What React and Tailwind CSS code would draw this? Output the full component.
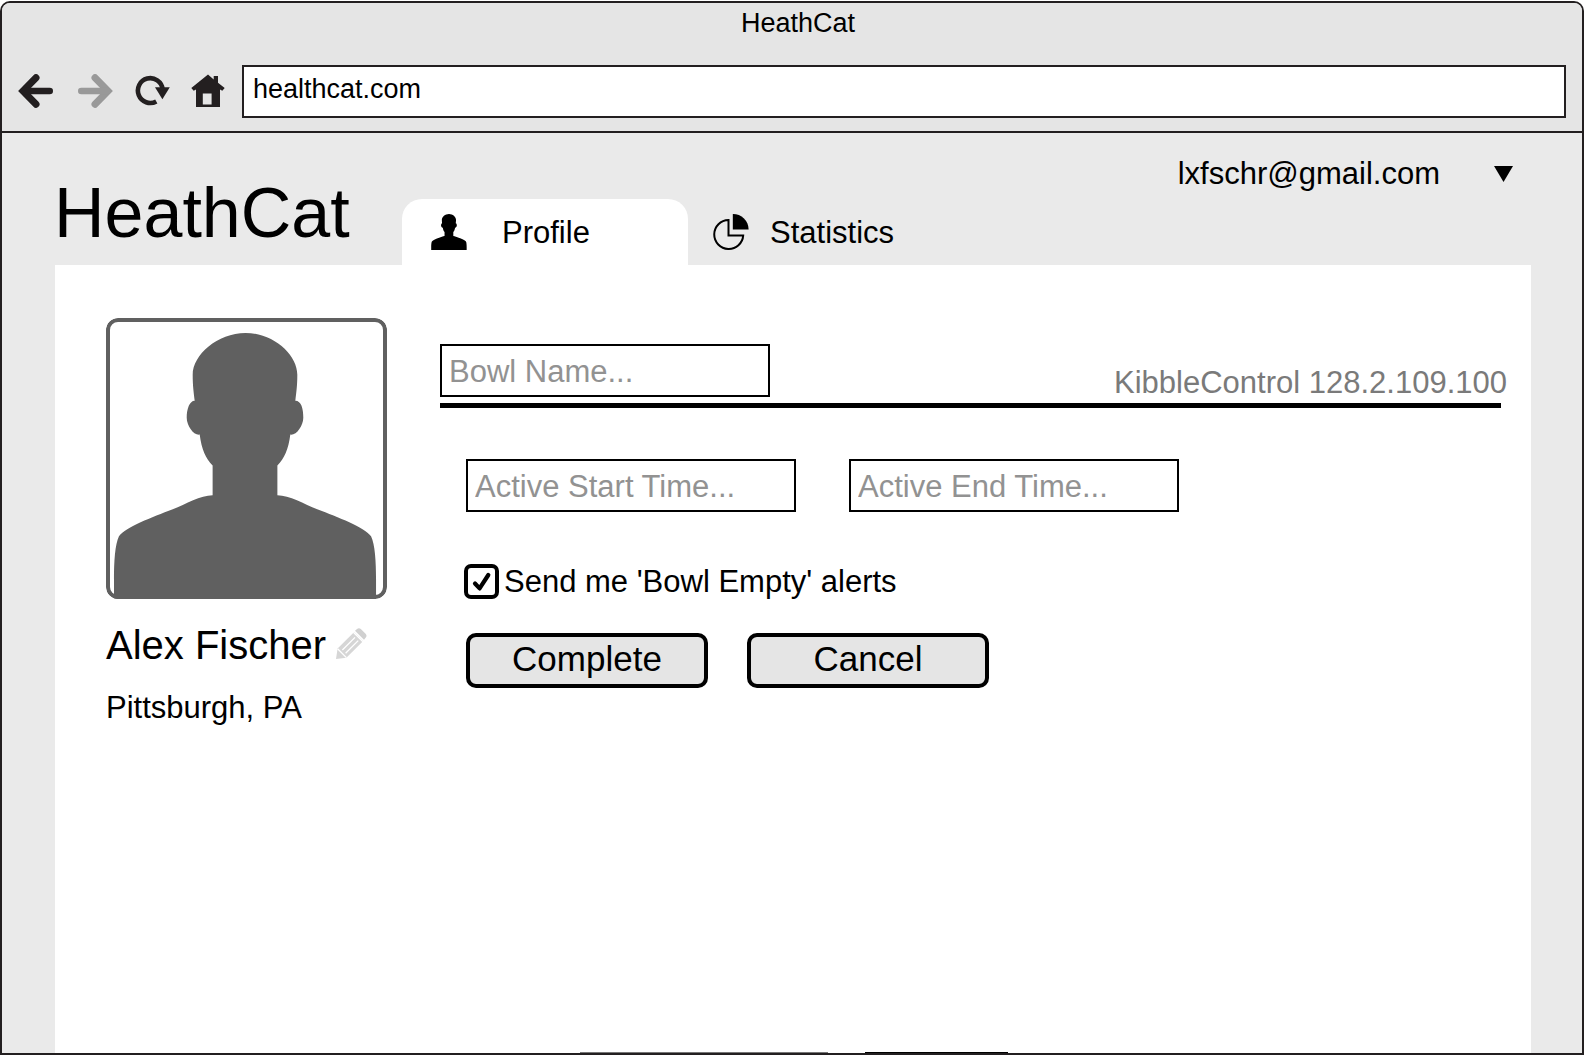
import { useState } from "react";

function ArrowIcon({ className }) {
  return (
    <svg viewBox="0 0 36 34" className={className} fill="none" stroke="currentColor" aria-hidden="true">
      <path d="M18 3.7 L5 17 L18 30.3" strokeWidth="7" strokeLinecap="round" strokeMiterlimit="6" />
      <path d="M6 17 H31.7" strokeWidth="6.6" strokeLinecap="round" />
    </svg>
  );
}

function RefreshIcon() {
  return (
    <svg viewBox="0 0 35 32" className="h-8 w-[35px]" fill="none" aria-hidden="true">
      <path d="M21.3 26.4 A12.4 12.4 0 1 1 27.6 14" stroke="currentColor" strokeWidth="4.6" />
      <path d="M20 12.2 H34.8 L27.4 24.2 Z" fill="currentColor" />
    </svg>
  );
}

function HomeIcon() {
  return (
    <svg viewBox="0 0 34 34" className="h-[34px] w-[34px]" fill="currentColor" aria-hidden="true">
      <path
        fillRule="evenodd"
        d="M17 .6 L22.7 5.4 V2 H27 V8.8 L33.7 14 L31.3 16.8 L29 15.4 V33 H5 V15.4 L2.7 16.8 L.3 14 Z M11.8 19.4 H20.6 V30.6 H11.8 Z"
      />
    </svg>
  );
}

function Silhouette({ viewBox, className }) {
  return (
    <svg viewBox={viewBox} className={className} fill="currentColor" aria-hidden="true">
      <path d="M140 15 C168 15 192 37 192 57 C192 68 191 75 190 83 C196 83 198 91 198 100 C198 108 191 118 185 117 C183 132 179 141 172 148 V178 C184 178 199 187 212 192 C233 200 259 210 266 219 C270 227 271 245 271 262 V282 H8 V262 C8 245 9 227 13 219 C20 210 46 200 67 192 C80 187 95 178 107 178 V148 C100 141 96 132 94 117 C88 118 81 108 81 100 C81 91 84 83 89 83 C88 75 87 68 87 57 C87 37 112 15 140 15 Z" />
    </svg>
  );
}

function PieIcon() {
  return (
    <svg viewBox="0 0 37 38" className="h-[38px] w-[37px]" aria-hidden="true">
      <path d="M15.5 7 V22.4 H30.2 A14.5 14.5 0 1 1 15.5 7 Z" fill="none" stroke="currentColor" strokeWidth="2" />
      <path d="M19.8 1 A15.5 15.5 0 0 1 35.6 16.6 H19.8 Z" fill="currentColor" />
    </svg>
  );
}

function PencilIcon() {
  return (
    <svg viewBox="0 0 31 31" className="h-[31px] w-[31px]" aria-hidden="true">
      <path d="M1.6 20.6 L18.2 4 L27.2 13 L10.4 29.8 L0 31 Z" fill="#d6d6d6" />
      <path d="M6.4 22 L19 9.4 M9.6 25.2 L22.2 12.6" stroke="#ffffff" strokeWidth="1.3" />
      <path d="M17.4 4.2 L27 13.8" stroke="#ffffff" strokeWidth="1.3" />
      <path d="M1.6 20.8 L10.4 29.6" stroke="#ffffff" strokeWidth="1.3" />
      <path d="M19 2.8 L21 .9 Q23 -.5 24.8 1 L29.8 6 Q31.2 7.8 29.8 9.6 L28 11.8 Z" fill="#d0d0d0" />
    </svg>
  );
}

function BrowserBar() {
  return (
    <header className="border-b-2 border-[#231f20] bg-[#e5e5e5] pt-1 pb-[13px]">
      <h2 className="pl-3 text-center text-[27px] leading-8">HeathCat</h2>
      <div className="mt-[26px] flex items-center gap-[17px] pr-4 pl-4">
        <div className="flex items-center gap-5 pb-[2px] text-[#231f20]">
          <button type="button" aria-label="Back" className="flex w-[38px]">
            <ArrowIcon className="h-[34px] w-9" />
          </button>
          <button type="button" aria-label="Forward" className="flex w-[37px] justify-end text-[#999999]">
            <ArrowIcon className="h-[34px] w-9 rotate-180" />
          </button>
          <button type="button" aria-label="Reload" className="flex w-[38px] justify-center">
            <RefreshIcon />
          </button>
          <button type="button" aria-label="Home" className="flex">
            <HomeIcon />
          </button>
        </div>
        <input
          type="text"
          aria-label="Address"
          defaultValue="healthcat.com"
          className="h-[53px] min-w-0 flex-1 border-2 border-[#231f20] bg-white px-[9px] pb-1 text-[27px] outline-none"
        />
      </div>
    </header>
  );
}

function SiteHeader() {
  return (
    <div className="flex h-[132px] items-end pr-[51px] pl-[52px]">
      <h1 className="mb-[17px] w-[348px] shrink-0 text-[70px] leading-[70px]">HeathCat</h1>
      <nav className="flex">
        <a
          href="#profile"
          aria-current="page"
          className="flex h-[66px] w-[286px] items-center gap-[35px] rounded-t-[20px] bg-white pl-[29px]"
        >
          <Silhouette viewBox="8 15 264 267" className="h-9 w-9" />
          <span className="pt-[2px]">Profile</span>
        </a>
        <a href="#statistics" className="flex h-[66px] items-center gap-5 pl-[25px]">
          <PieIcon />
          <span className="pt-[2px]">Statistics</span>
        </a>
      </nav>
      <button
        type="button"
        aria-haspopup="menu"
        className="mt-[23px] mr-[18px] ml-auto flex items-center gap-[54px] self-start leading-9"
      >
        lxfschr@gmail.com
        <svg viewBox="0 0 19 16" className="h-4 w-[19px]" aria-hidden="true">
          <path d="M0 0 H19 L9.5 16 Z" fill="currentColor" />
        </svg>
      </button>
    </div>
  );
}

function ProfileCard() {
  return (
    <aside className="w-[281px] shrink-0">
      <div className="relative h-[281px] overflow-hidden rounded-xl text-[#606060]">
        <Silhouette viewBox="0 0 282 282" className="h-full w-full" />
        <div className="absolute inset-0 rounded-xl border-4 border-[#606060]" />
      </div>
      <div className="mt-[22px] flex items-center gap-[10px]">
        <h2 className="text-[40px] leading-[48px] whitespace-nowrap">Alex Fischer</h2>
        <button type="button" aria-label="Edit name" className="pb-1">
          <PencilIcon />
        </button>
      </div>
      <p className="mt-[21px] leading-9">Pittsburgh, PA</p>
    </aside>
  );
}

function TextField({ label }) {
  return (
    <input
      type="text"
      aria-label={label}
      placeholder={label + "..."}
      className="h-[53px] w-[330px] border-2 border-black bg-white px-[7px] pt-[2px] outline-none placeholder:text-[#929292]"
    />
  );
}

function ActionButton({ children, type }) {
  return (
    <button
      type={type}
      className="h-[55px] w-[242px] rounded-[10px] border-4 border-black bg-[#e5e5e5] pb-[3px] text-[35px] leading-10"
    >
      {children}
    </button>
  );
}

function BowlForm() {
  const [alerts, setAlerts] = useState(true);
  return (
    <form className="min-w-0 flex-1 pt-[26px]" onSubmit={(e) => e.preventDefault()}>
      <div className="flex items-end justify-between">
        <TextField label="Bowl Name" />
        <p className="leading-7 text-[#7a7a7a]">KibbleControl 128.2.109.100</p>
      </div>
      <hr className="mt-[6px] mr-[6px] border-t-[5px] border-black" />
      <div className="mt-[51px] flex gap-[53px] pl-[26px]">
        <TextField label="Active Start Time" />
        <TextField label="Active End Time" />
      </div>
      <label className="mt-[50px] ml-6 flex w-fit items-center gap-[5px] leading-9">
        <span className="relative flex h-[35px] w-[35px]">
          <input
            type="checkbox"
            checked={alerts}
            onChange={(e) => setAlerts(e.target.checked)}
            className="h-[35px] w-[35px] appearance-none rounded-[7px] border-4 border-black bg-white"
          />
          {alerts && (
            <svg viewBox="0 0 35 35" className="pointer-events-none absolute inset-0" fill="none" aria-hidden="true">
              <path
                d="M11 19.5 L15.6 24.4 L24.3 11"
                stroke="black"
                strokeWidth="4.2"
                strokeLinecap="round"
                strokeLinejoin="round"
              />
            </svg>
          )}
        </span>
        <span className="pt-[2px]">Send me 'Bowl Empty' alerts</span>
      </label>
      <div className="mt-[33px] flex gap-[39px] pl-[26px]">
        <ActionButton type="submit">Complete</ActionButton>
        <ActionButton type="button">Cancel</ActionButton>
      </div>
    </form>
  );
}

export default function App() {
  return (
    <div className="flex min-h-screen flex-col bg-white pt-px font-['Liberation_Sans',Arial,sans-serif] text-[31px] text-black">
      <div className="flex flex-1 flex-col overflow-hidden rounded-t-[10px] border-2 border-[#231f20] bg-[#eaeaea]">
        <BrowserBar />
        <SiteHeader />
        <main className="mr-[51px] ml-[53px] flex flex-1 flex-col bg-white">
          <div className="flex gap-[53px] pt-[53px] pr-6 pl-[51px]">
            <ProfileCard />
            <BowlForm />
          </div>
          <div className="mt-auto flex gap-[37px] pl-[525px]" aria-hidden="true">
            <div className="h-px w-[248px] bg-[#777777]" />
            <div className="h-px w-[143px] bg-black" />
          </div>
        </main>
      </div>
    </div>
  );
}
